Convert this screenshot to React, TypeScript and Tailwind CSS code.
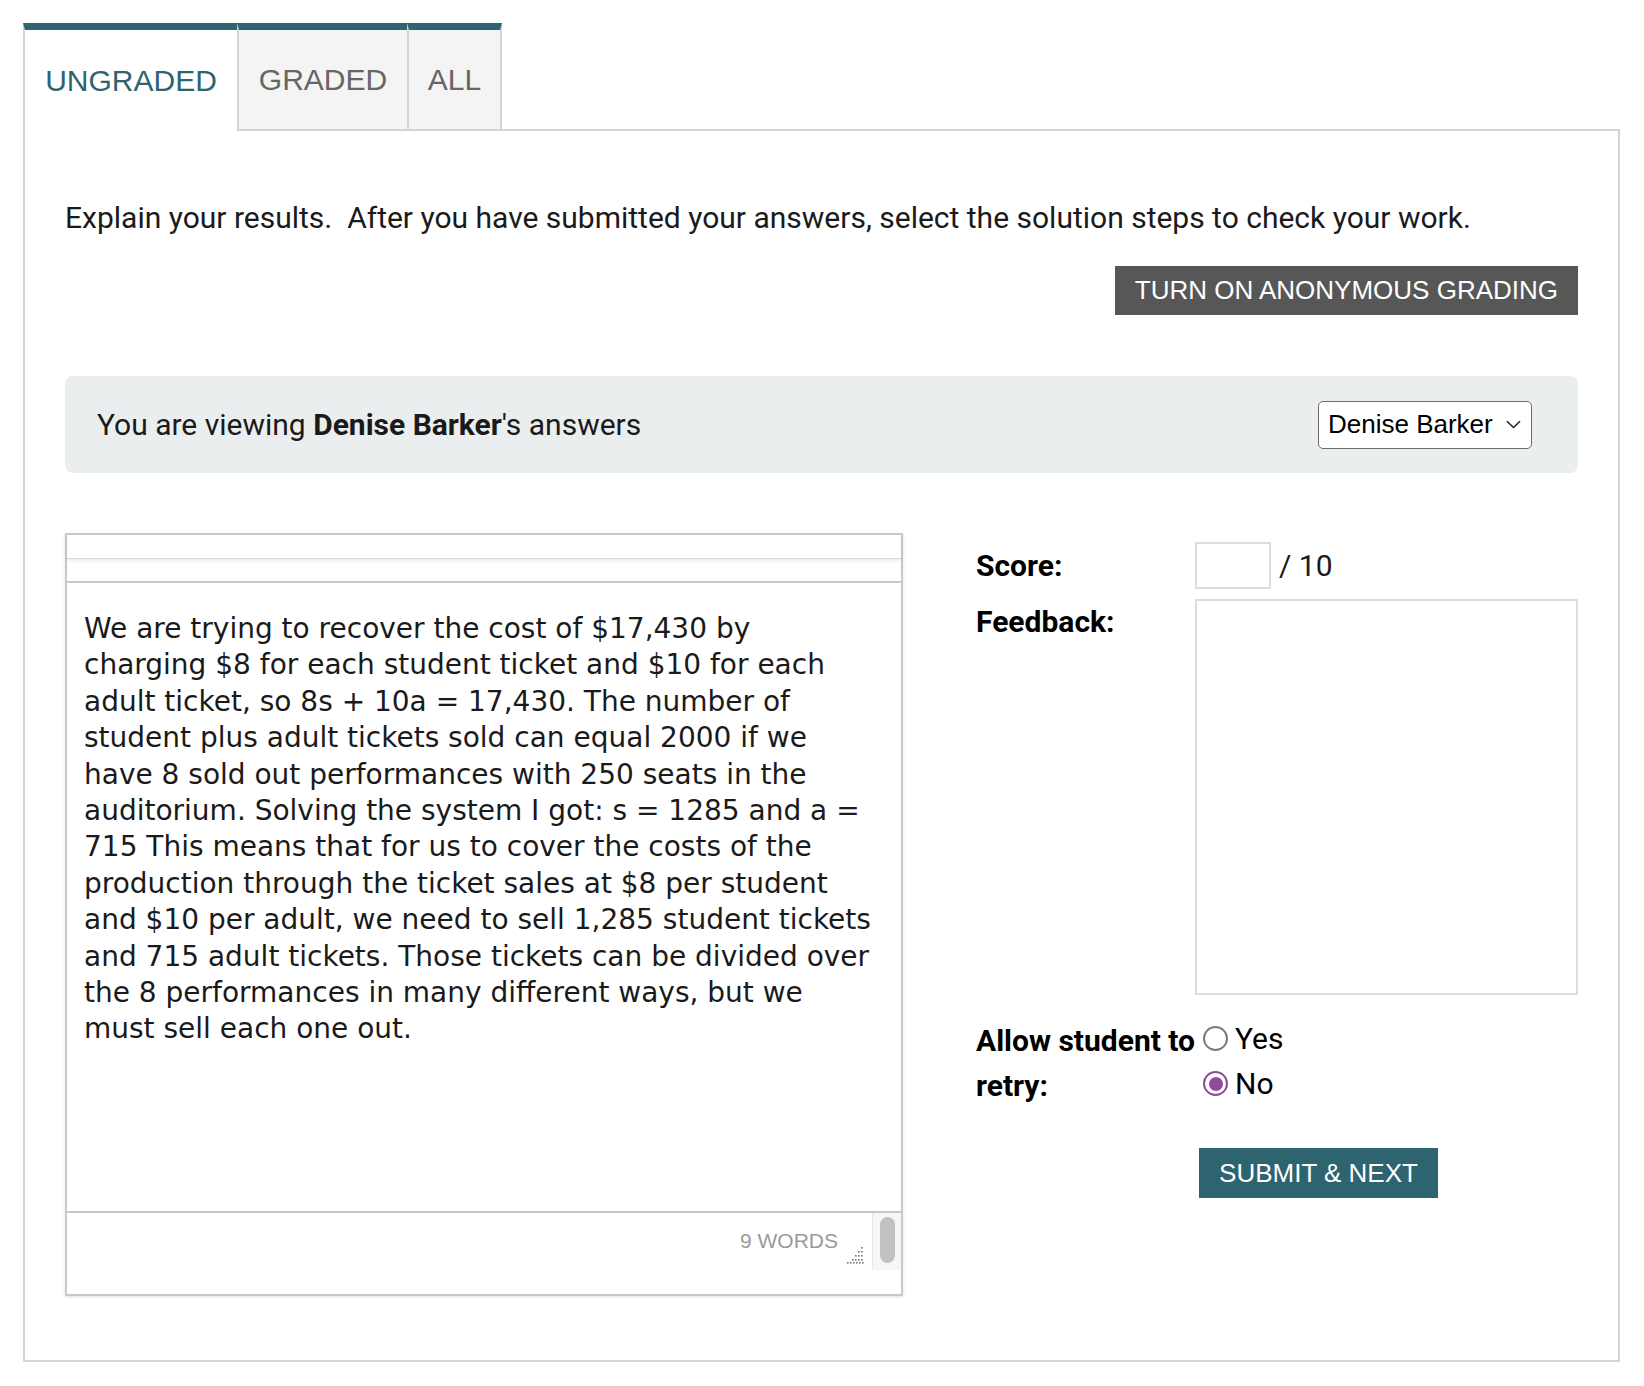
import React from "react";

const lines = [
  "We are trying to recover the cost of $17,430 by",
  "charging $8 for each student ticket and $10 for each",
  "adult ticket, so 8s + 10a = 17,430. The number of",
  "student plus adult tickets sold can equal 2000 if we",
  "have 8 sold out performances with 250 seats in the",
  "auditorium. Solving the system I got: s = 1285 and a =",
  "715 This means that for us to cover the costs of the",
  "production through the ticket sales at $8 per student",
  "and $10 per adult, we need to sell 1,285 student tickets",
  "and 715 adult tickets. Those tickets can be divided over",
  "the 8 performances in many different ways, but we",
  "must sell each one out.",
];

function Radio({ checked, label }: { checked: boolean; label: string }) {
  return (
    <div className="flex items-center h-[45px]">
      <span
        className={
          checked
            ? "ml-[8px] w-[25px] h-[25px] rounded-full border-[2.5px] border-[#8e4b9a] flex items-center justify-center"
            : "ml-[8px] w-[25px] h-[25px] rounded-full border-[2px] border-[#7a7a7a]"
        }
      >
        {checked && <span className="w-[14px] h-[14px] rounded-full bg-[#8e4b9a]" />}
      </span>
      <span className="ml-[7px] text-[30px] text-black">{label}</span>
    </div>
  );
}

export default function App() {
  return (
    <div className="bg-white min-h-[1386px] w-[1644px] font-['Roboto',sans-serif]">
      <div className="pl-[23px] pt-[23px] w-[1620px]">
        {/* Tabs */}
        <div className="flex h-[108px]">
          <div className="w-[214px] border-t-[7px] border-t-[#2e6370] border-l-2 border-l-[#d4d4d4] bg-white flex items-center justify-center font-['Liberation_Sans',Arial,sans-serif] text-[30px] text-[#2e6370]">
            UNGRADED
          </div>
          <div className="w-[170px] border-t-[7px] border-t-[#2e6370] border-l-2 border-l-[#d4d4d4] border-b-2 border-b-[#d4d4d4] bg-[#f4f4f4] flex items-center justify-center font-['Liberation_Sans',Arial,sans-serif] text-[30px] text-[#666666]">
            GRADED
          </div>
          <div className="w-[95px] border-t-[7px] border-t-[#2e6370] border-x-2 border-x-[#d4d4d4] border-b-2 border-b-[#d4d4d4] bg-[#f4f4f4] flex items-center justify-center font-['Liberation_Sans',Arial,sans-serif] text-[30px] text-[#666666]">
            ALL
          </div>
          <div className="flex-1 border-b-2 border-b-[#d4d4d4]" />
        </div>

        {/* Panel */}
        <div className="border-2 border-t-0 border-[#d4d4d4] px-[40px] pt-[67px] pb-[64px]">
          <p className="text-[30px] leading-[40px] text-[#1a1a1a]">
            Explain your results.&nbsp; After you have submitted your answers, select the solution steps to check your work.
          </p>

          <div className="flex justify-end mt-[28px]">
            <button className="h-[49px] px-[20px] bg-[#575757] text-white font-['Liberation_Sans',Arial,sans-serif] text-[26px]">
              TURN ON ANONYMOUS GRADING
            </button>
          </div>

          <div className="mt-[61px] h-[97px] rounded-[8px] bg-[#ebeeef] flex items-center justify-between pl-[32px] pr-[46px]">
            <div className="text-[30px] text-[#1a1a1a]">
              You are viewing <span className="font-bold">Denise Barker</span>'s answers
            </div>
            <div className="w-[214px] h-[48px] rounded-[5px] border-[1.5px] border-[#6b6b6b] bg-white flex items-center pl-[9px] pr-[10px] font-['Liberation_Sans',Arial,sans-serif] text-[26px] text-black">
              <span className="flex-1">Denise Barker</span>
              <svg width="15" height="9" viewBox="0 0 15 9" fill="none">
                <path d="M1 1.2 L7.5 7.5 L14 1.2" stroke="#222" strokeWidth="1.6" />
              </svg>
            </div>
          </div>

          <div className="mt-[60px] flex items-start">
            {/* Editor */}
            <div className="w-[838px] h-[763px] border-2 border-[#c8c8c8] shadow-[0_1px_3px_rgba(0,0,0,0.12)] flex flex-col">
              <div className="h-[24px] border-b border-[#d8d8d8] shadow-[0_2px_3px_rgba(0,0,0,0.08)]" />
              <div className="h-[24px] border-b-2 border-[#c8c8c8]" />
              <div className="flex-1 pt-[28px] pl-[17px] font-['DejaVu_Sans',Verdana,sans-serif] text-[28px] leading-[36.4px] text-[#1a1a1a]">
                {lines.map((l, i) => (
                  <div key={i} className="whitespace-nowrap">
                    {l}
                  </div>
                ))}
              </div>
              <div className="h-[83px] border-t-2 border-[#c8c8c8] flex items-start">
                <div className="flex-1 flex justify-end items-start pt-[10px]">
                  <span className="font-['Liberation_Sans',Arial,sans-serif] text-[21px] text-[#9a9a9a] mt-[2px]">
                    9 WORDS
                  </span>
                  <svg width="18" height="17" viewBox="0 0 18 17" className="ml-[9px] mt-[24px]">
                    {[
                      [15, 1], [12, 5], [15, 5], [9, 9], [12, 9], [15, 9], [6, 13], [9, 13], [12, 13], [15, 13], [1, 16], [4, 16], [7, 16], [10, 16], [13, 16], [16, 16],
                    ].map(([x, y], i) => (
                      <rect key={i} x={x - 1} y={y - 1} width="1.6" height="1.6" fill="#777" />
                    ))}
                  </svg>
                </div>
                <div className="ml-[7px] w-[29px] h-[57px] bg-[#f6f6f6] border-l border-[#e6e6e6] flex justify-center pt-[4px]">
                  <div className="w-[15px] h-[46px] rounded-full bg-[#c1c1c1]" />
                </div>
              </div>
            </div>

            {/* Right column */}
            <div className="ml-[73px] mt-[9px] flex-1">
              <div className="flex items-center h-[47px]">
                <div className="w-[219px] text-[30px] font-bold text-black">Score:</div>
                <div className="w-[76px] h-[47px] border-2 border-[#dddddd]" />
                <span className="ml-[8px] text-[30px] text-[#1a1a1a]">/ 10</span>
              </div>
              <div className="flex items-start mt-[10px]">
                <div className="w-[219px] text-[30px] leading-[45px] font-bold text-black">Feedback:</div>
                <div className="w-[383px] h-[396px] border-2 border-[#dddddd]" />
              </div>
              <div className="flex items-start mt-[23px]">
                <div className="w-[219px] shrink-0 whitespace-nowrap text-[30px] leading-[45px] font-bold text-black">
                  Allow student to
                  <br />
                  retry:
                </div>
                <div className="-mt-[2px]">
                  <Radio checked={false} label="Yes" />
                  <Radio checked={true} label="No" />
                </div>
              </div>
              <div className="mt-[40px] pl-[223px]">
                <button className="h-[50px] w-[239px] bg-[#2e6370] text-white font-['Liberation_Sans',Arial,sans-serif] text-[26px]">
                  SUBMIT &amp; NEXT
                </button>
              </div>
            </div>
          </div>
        </div>
      </div>
    </div>
  );
}
